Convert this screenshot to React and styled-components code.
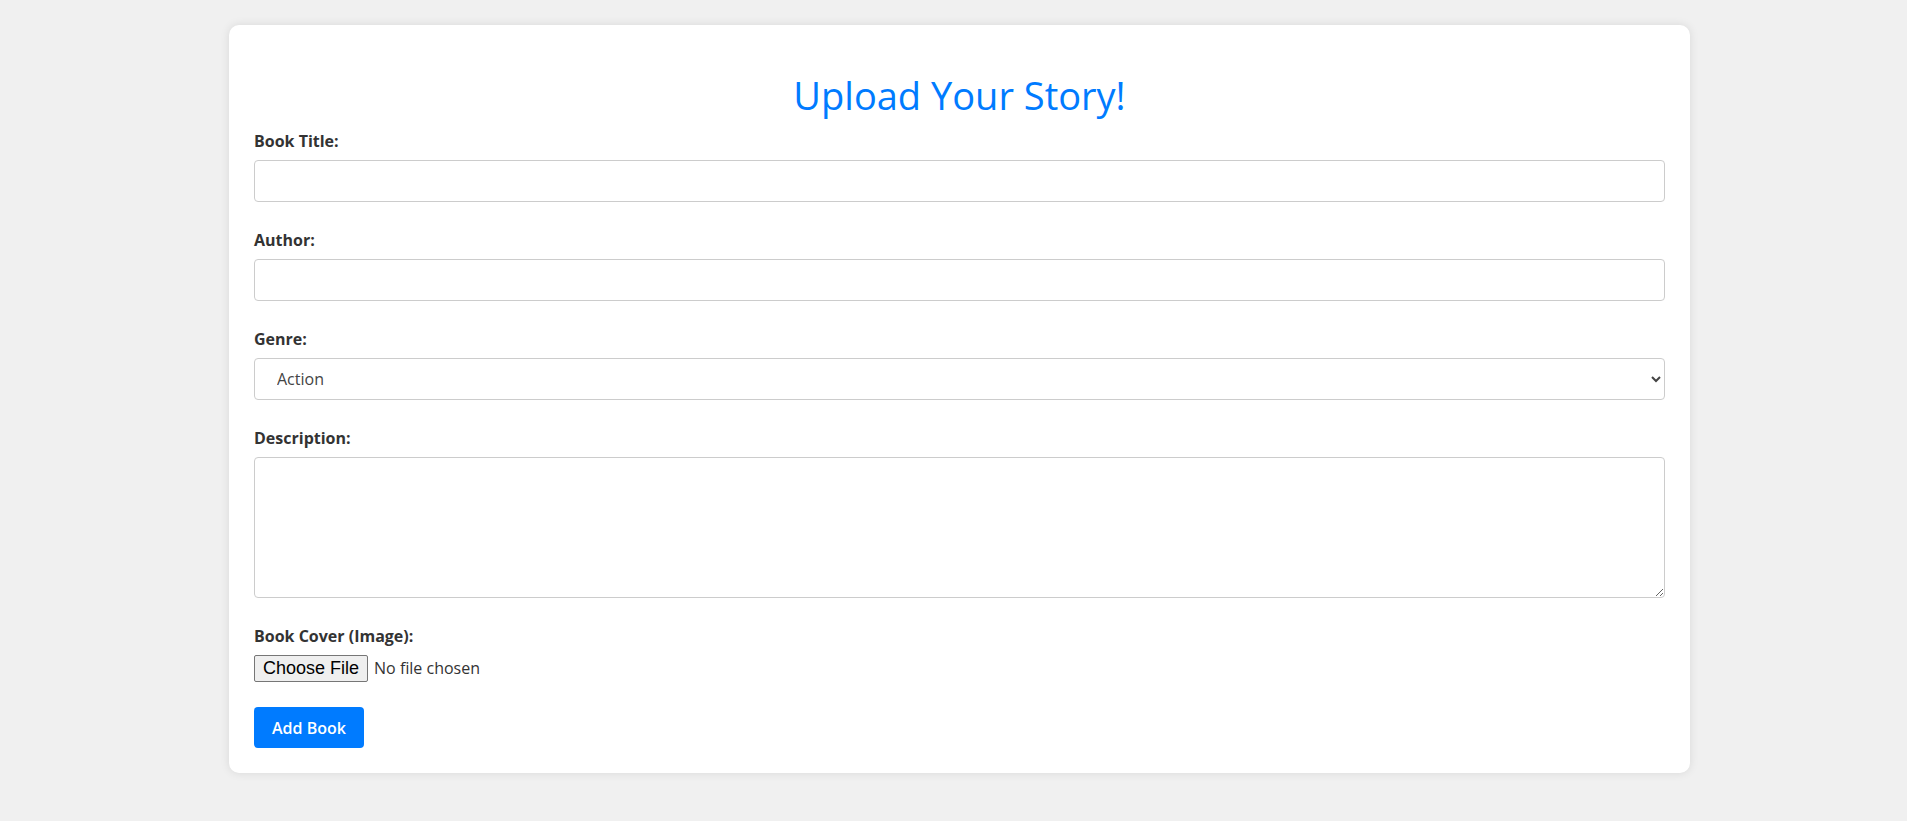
import React, { useState } from "react";
import styled, { createGlobalStyle } from "styled-components";

const GlobalStyle = createGlobalStyle`
  html, body {
    margin: 0;
    padding: 0;
    background-color: #f0f0f0;
    font-family: "Comic Sans MS", "Open Sans", "Noto Sans", sans-serif;
  }
`;

const Page = styled.div`
  padding: 25px 217px 48px 229px;
`;

const FormCard = styled.form`
  background-color: #ffffff;
  border-radius: 10px;
  box-shadow: 0 0 10px rgba(0, 0, 0, 0.1);
  padding: 25px;
`;

const Title = styled.h2`
  margin: 23px 0 13px;
  text-align: center;
  color: #007bff;
  font-size: 38px;
  font-weight: 400;
  line-height: 44px;
`;

const FormGroup = styled.div`
  margin-bottom: ${({ tight }) => (tight ? "25px" : "27px")};
`;

const Label = styled.label`
  display: block;
  margin-bottom: 8px;
  color: #333;
  font-size: 16px;
  font-weight: 700;
  line-height: 22px;
`;

const Input = styled.input`
  display: block;
  box-sizing: border-box;
  width: 100%;
  height: 42px;
  padding: 10px;
  border: 1px solid #ccc;
  border-radius: 4px;
  font-family: inherit;
  font-size: 16px;
  color: #444;
`;

const Select = styled.select`
  display: block;
  box-sizing: border-box;
  width: 100%;
  height: 42px;
  padding: 0 10px 0 18px;
  border: 1px solid #ccc;
  border-radius: 4px;
  background-color: #fff;
  font-family: inherit;
  font-size: 16px;
  color: #444;
`;

const TextArea = styled.textarea`
  display: block;
  box-sizing: border-box;
  width: 100%;
  height: 141px;
  padding: 10px;
  border: 1px solid #ccc;
  border-radius: 4px;
  font-family: inherit;
  font-size: 16px;
  color: #444;
`;

const FileInput = styled.input`
  display: block;
  height: 27px;
  font-family: inherit;
  font-size: 16px;
  color: #333;

  &::file-selector-button {
    font-family: "Liberation Sans", Arial, sans-serif;
    font-size: 18px;
    height: 27px;
    padding: 1px 8px;
    margin-right: 6px;
    background-color: #efefef;
    border: 1px solid #767676;
    border-radius: 2px;
    color: #000;
  }
`;

const SubmitButton = styled.button`
  display: block;
  height: 41px;
  padding: 0 18px;
  background-color: #007bff;
  color: #fff;
  border: none;
  border-radius: 4px;
  font-family: inherit;
  font-size: 16px;
  font-weight: 600;
  cursor: pointer;

  &:hover {
    background-color: #0056b3;
  }
`;

const genres = ["Action", "Adventure", "Comedy", "Drama", "Fantasy", "Horror", "Mystery", "Romance"];

const App = () => {
  const [genre, setGenre] = useState("Action");

  return (
    <Page>
      <GlobalStyle />
      <FormCard onSubmit={(e) => e.preventDefault()}>
        <Title>Upload Your Story!</Title>
        <FormGroup>
          <Label htmlFor="title">Book Title:</Label>
          <Input id="title" type="text" />
        </FormGroup>
        <FormGroup>
          <Label htmlFor="author">Author:</Label>
          <Input id="author" type="text" />
        </FormGroup>
        <FormGroup>
          <Label htmlFor="genre">Genre:</Label>
          <Select id="genre" value={genre} onChange={(e) => setGenre(e.target.value)}>
            {genres.map((g) => (
              <option key={g} value={g}>
                {g}
              </option>
            ))}
          </Select>
        </FormGroup>
        <FormGroup>
          <Label htmlFor="description">Description:</Label>
          <TextArea id="description" />
        </FormGroup>
        <FormGroup tight>
          <Label htmlFor="cover">Book Cover (Image):</Label>
          <FileInput id="cover" type="file" accept="image/*" />
        </FormGroup>
        <SubmitButton type="submit">Add Book</SubmitButton>
      </FormCard>
    </Page>
  );
};

export default App;
